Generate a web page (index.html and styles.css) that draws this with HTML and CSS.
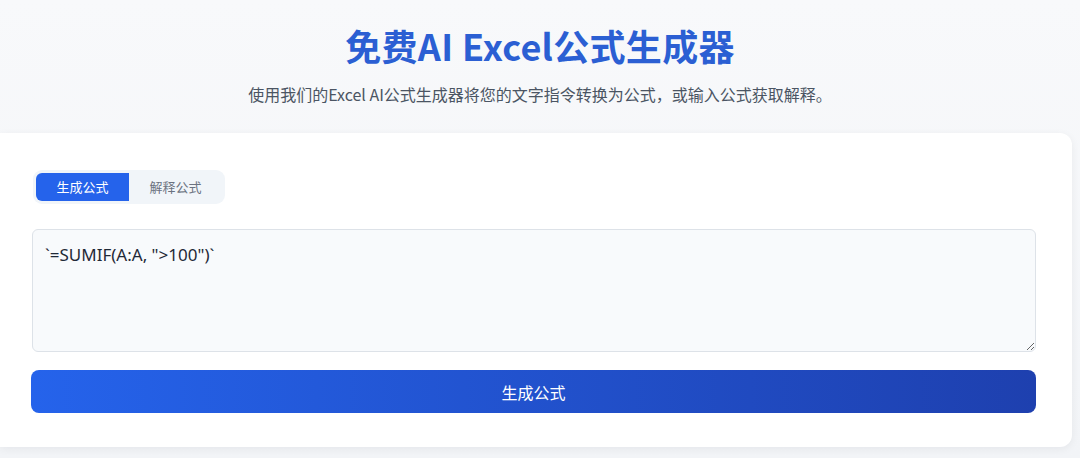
FILE: index.html
```html
<!DOCTYPE html>
<html lang="zh-CN">
<head>
<meta charset="utf-8">
<link rel="stylesheet" href="styles.css">
</head>
<body>
<div class="page">
  <header class="hero">
    <h1 class="title">免费AI Excel公式生成器</h1>
    <p class="subtitle">使用我们的Excel AI公式生成器将您的文字指令转换为公式，或输入公式获取解释。</p>
  </header>
  <section class="card">
    <div class="tabs">
      <button class="tab active">生成公式</button>
      <button class="tab">解释公式</button>
    </div>
    <textarea class="input">`=SUMIF(A:A, "&gt;100")`</textarea>
    <button class="submit">生成公式</button>
  </section>
</div>
</body>
</html>
```
FILE: styles.css
```css
* { box-sizing: border-box; }
html, body { margin: 0; padding: 0; }
body {
  width: 1080px;
  height: 458px;
  overflow: hidden;
  background: linear-gradient(180deg, #f8f9fb 0%, #f2f4f7 100%);
  font-family: "Noto Sans CJK SC", "Noto Sans", sans-serif;
}
.page { display: flex; flex-direction: column; }
.hero {
  display: flex;
  flex-direction: column;
  align-items: center;
  padding-top: 21px;
}
.title {
  margin: 0;
  font-size: 36px;
  line-height: 48px;
  font-weight: 700;
  color: #2b5fd3;
  letter-spacing: 0.3px;
}
.subtitle {
  margin: 14px 0 0;
  font-size: 16px;
  line-height: 22px;
  color: #4b5563;
}
.card {
  margin-top: 28px;
  width: 1072px;
  height: 314px;
  background: #ffffff;
  border-radius: 0 12px 12px 0;
  box-shadow: 0 2px 8px rgba(15, 23, 42, 0.06);
  padding: 37px 36px 0 32px;
  display: flex;
  flex-direction: column;
}
.tabs {
  align-self: flex-start;
  display: flex;
  background: #f1f5f9;
  border-radius: 9px;
  padding: 3px;
  margin-left: 1px;
}
.tab {
  border: none;
  background: transparent;
  font-family: inherit;
  font-size: 13px;
  line-height: 28px;
  height: 28px;
  width: 93px;
  color: #6b7280;
  padding: 0;
  border-radius: 6px 0 0 6px;
}
.tab.active {
  background: #2563eb;
  color: #ffffff;
}
.input {
  margin-top: 25px;
  height: 123px;
  width: 100%;
  background: #f8fafc;
  border: 1px solid #dde2e8;
  border-radius: 6px;
  padding: 13px 12px;
  font-family: "Noto Sans", "Noto Sans CJK SC", sans-serif;
  font-size: 17px;
  line-height: 24px;
  color: #1f2937;
  resize: vertical;
}
.submit {
  margin-top: 18px;
  margin-left: -1px;
  width: calc(100% + 1px);
  height: 43px;
  border: none;
  border-radius: 8px;
  background: linear-gradient(90deg, #2563eb 0%, #1e40af 100%);
  color: #ffffff;
  font-family: inherit;
  font-size: 16px;
}
```
